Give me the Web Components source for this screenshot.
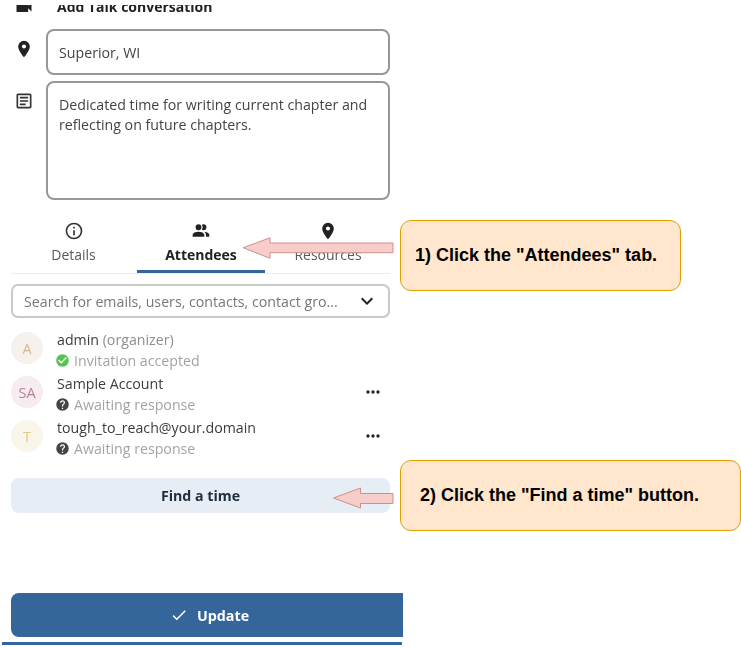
<!DOCTYPE html>
<html lang="en">
<head>
<meta charset="utf-8">
<title>Attendees</title>
<style>
html, body { margin: 0; padding: 0; background: #fff; }
body { font-family: "Open Sans", sans-serif; overflow: hidden; }
</style>
</head>
<body>
<event-page></event-page>
<script>
const ICONS = {
    video: "M17,10.5V7A1,1 0 0,0 16,6H4A1,1 0 0,0 3,7V17A1,1 0 0,0 4,18H16A1,1 0 0,0 17,17V13.5L21,17.5V6.5L17,10.5Z",
    marker: "M12,11.5A2.5,2.5 0 0,1 9.5,9A2.5,2.5 0 0,1 12,6.5A2.5,2.5 0 0,1 14.5,9A2.5,2.5 0 0,1 12,11.5M12,2A7,7 0 0,0 5,9C5,14.25 12,22 12,22C12,22 19,14.25 19,9A7,7 0 0,0 12,2Z",
    text: "M5,3C3.89,3 3,3.89 3,5V19C3,20.11 3.89,21 5,21H19C20.11,21 21,20.11 21,19V5C21,3.89 20.11,3 19,3H5M5,5H19V19H5V5M7,7V9H17V7H7M7,11V13H17V11H7M7,15V17H14V15H7Z",
    info: "M11,9H13V7H11M12,20C7.59,20 4,16.41 4,12C4,7.59 7.59,4 12,4C16.41,4 20,7.59 20,12C20,16.41 16.41,20 12,20M12,2A10,10 0 0,0 2,12A10,10 0 0,0 12,22A10,10 0 0,0 22,12A10,10 0 0,0 12,2M11,17H13V11H11V17Z",
    people: "M16 17V19H2V17S2 13 9 13 16 17 16 17M12.5 7.5A3.5 3.5 0 1 0 9 11A3.5 3.5 0 0 0 12.5 7.5M15.94 13A5.32 5.32 0 0 1 18 17V19H22V17S22 13.37 15.94 13M15 4A3.39 3.39 0 0 0 13.07 4.59A5 5 0 0 1 13.07 10.41A3.39 3.39 0 0 0 15 11A3.5 3.5 0 0 0 15 4Z",
    chevron: "M7.41,8.58L12,13.17L16.59,8.58L18,10L12,16L6,10L7.41,8.58Z",
    dots: "M16,12A2,2 0 0,1 18,10A2,2 0 0,1 20,12A2,2 0 0,1 18,14A2,2 0 0,1 16,12M10,12A2,2 0 0,1 12,10A2,2 0 0,1 14,12A2,2 0 0,1 12,14A2,2 0 0,1 10,12M4,12A2,2 0 0,1 6,10A2,2 0 0,1 8,12A2,2 0 0,1 6,14A2,2 0 0,1 4,12Z",
    check: "M21,7L9,19L3.5,13.5L4.91,12.09L9,16.17L19.59,5.59L21,7Z",
    accepted: "M12 2C6.5 2 2 6.5 2 12S6.5 22 12 22 22 17.5 22 12 17.5 2 12 2M10 17L5 12L6.41 10.59L10 14.17L17.59 6.58L19 8L10 17Z",
    question: "M15.07,11.25L14.17,12.17C13.45,12.89 13,13.5 13,15H11V14.5C11,13.39 11.45,12.39 12.17,11.67L13.41,10.41C13.78,10.05 14,9.55 14,9C14,7.89 13.1,7 12,7A2,2 0 0,0 10,9H8A4,4 0 0,1 12,5A4,4 0 0,1 16,9C16,9.88 15.64,10.67 15.07,11.25M13,19H11V17H13M12,2A10,10 0 0,0 2,12A10,10 0 0,0 12,22A10,10 0 0,0 22,12C22,6.47 17.5,2 12,2Z"
};

class MdiIcon extends HTMLElement {
    connectedCallback() {
        const size = this.getAttribute("size") || 20;
        const color = this.getAttribute("color") || "currentColor";
        this.attachShadow({mode: "open"}).innerHTML = `
        <style>
        :host { display: inline-flex; width: ${size}px; height: ${size}px; flex: none; }
        svg { width: 100%; height: 100%; display: block; }
        </style>
        <svg viewBox="0 0 24 24"><path fill="${color}" d="${ICONS[this.getAttribute("name")]}"/></svg>`;
    }
}
customElements.define("mdi-icon", MdiIcon);

class FieldRow extends HTMLElement {
    connectedCallback() {
        const h = this.getAttribute("height");
        this.attachShadow({mode: "open"}).innerHTML = `
        <style>
        :host { display: flex; align-items: flex-start; color: #222; }
        .icon { width: 35px; padding-top: var(--icon-top, 10px); padding-left: 3px; box-sizing: border-box; }
        .box {
            width: 344px;
            height: ${h}px;
            box-sizing: border-box;
            border: 2px solid #979797;
            border-radius: 8px;
            padding: 12px 11px;
            font-size: 14.2px;
            line-height: 20px;
            color: #444;
        }
        </style>
        <div class="icon"><slot name="icon"></slot></div>
        <div class="box"><slot></slot></div>`;
    }
}
customElements.define("field-row", FieldRow);

class TabItem extends HTMLElement {
    connectedCallback() {
        const active = this.hasAttribute("active");
        this.attachShadow({mode: "open"}).innerHTML = `
        <style>
        :host {
            display: flex;
            flex-direction: column;
            align-items: center;
            width: var(--tab-width, 126px);
            height: 52px;
            box-sizing: border-box;
            font-size: 14px;
            line-height: 20px;
            color: ${active ? "#222" : "#595959"};
            font-weight: ${active ? 700 : 400};
            border-bottom: 3px solid ${active ? "#34659b" : "transparent"};
        }
        .label { margin-top: 4px; }
        </style>
        <slot name="icon"></slot>
        <div class="label"><slot></slot></div>`;
    }
}
customElements.define("tab-item", TabItem);

class AttendeeRow extends HTMLElement {
    connectedCallback() {
        const accepted = this.getAttribute("status") === "accepted";
        const more = this.hasAttribute("more") ? `<mdi-icon class="more" name="dots" size="20" color="#222"></mdi-icon>` : "";
        this.attachShadow({mode: "open"}).innerHTML = `
        <style>
        :host { display: flex; align-items: center; height: 44px; }
        .avatar {
            width: 32px;
            height: 32px;
            border-radius: 50%;
            display: flex;
            align-items: center;
            justify-content: center;
            font-size: 14.5px;
            flex: none;
            background: var(--avatar-bg);
            color: var(--avatar-fg);
        }
        .info { margin: 2px 0 0 14px; flex: 1; min-width: 0; }
        .name { font-size: 14.2px; line-height: 22px; color: #3c3c3c; padding-top: 1px; margin-bottom: -1px; }
        .status { display: flex; align-items: center; gap: 4px; margin-left: -2px; font-size: 14.2px; line-height: 21px; color: #a3a3a3; }
        .more { margin-right: 7px; }
        </style>
        <div class="avatar">${this.getAttribute("initials")}</div>
        <div class="info">
            <div class="name"><slot></slot></div>
            <div class="status">
                <mdi-icon name="${accepted ? "accepted" : "question"}" size="15" color="${accepted ? "#55c34f" : "#454545"}"></mdi-icon>
                ${this.getAttribute("label")}
            </div>
        </div>
        ${more}`;
    }
}
customElements.define("attendee-row", AttendeeRow);

class CalloutBox extends HTMLElement {
    connectedCallback() {
        this.attachShadow({mode: "open"}).innerHTML = `
        <style>
        :host {
            position: absolute;
            display: flex;
            align-items: center;
            box-sizing: border-box;
            height: 71px;
            background: #ffe6cc;
            border: 1px solid #e0a000;
            border-radius: 11px;
            font-family: "Liberation Sans", Arial, sans-serif;
            font-weight: 700;
            font-size: 18px;
            color: #000;
            white-space: nowrap;
        }
        </style>
        <slot></slot>`;
    }
}
customElements.define("callout-box", CalloutBox);

class EventPage extends HTMLElement {
    connectedCallback() {
        this.attachShadow({mode: "open"}).innerHTML = `
        <style>
        :host { display: block; position: relative; width: 741px; height: 648px; overflow: hidden; background: #fff; }
        .panel { width: 403px; box-sizing: border-box; padding-left: 11px; height: 648px; filter: blur(0.45px); }
        .clipped { height: 8px; overflow: hidden; display: flex; align-items: flex-end; color: #222; margin-top: 5px; margin-bottom: 16px; }
        .clipped .inner { display: flex; align-items: center; margin-bottom: -4px; }
        .clipped mdi-icon { margin-left: 3px; margin-right: 23px; }
        .clipped b { font-size: 14px; line-height: 20px; }
        field-row + field-row { margin-top: 6px; }
        .tabs { display: flex; width: 379px; height: 52px; margin-top: 21px; border-bottom: 1px solid #ededed; }
        .tabs tab-item { flex: none; }
        .tabs tab-item:first-child { --tab-width: 125px; margin-right: 1px; }
        .tabs tab-item[active] { --tab-width: 128px; }
        .search {
            display: flex;
            align-items: center;
            justify-content: space-between;
            width: 379px;
            height: 34px;
            box-sizing: border-box;
            margin-top: 10px;
            border: 2px solid #c8c8c8;
            border-radius: 7px;
            padding: 0 9px 0 11px;
            font-size: 14.2px;
            color: #777;
            white-space: nowrap;
        }
        .people { margin-top: 8px; width: 379px; }
        .find {
            display: flex;
            align-items: center;
            justify-content: center;
            width: 379px;
            height: 35px;
            margin-top: 20px;
            border-radius: 8px;
            background: #e6edf4;
            color: #1f2d3d;
            font-size: 14.2px;
            font-weight: 700;
        }
        .update {
            display: flex;
            align-items: center;
            justify-content: center;
            gap: 9px;
            width: 392px;
            height: 44px;
            box-sizing: border-box;
            padding-left: 5px;
            margin-top: 80px;
            border-radius: 8px 0 0 8px;
            background: #34659b;
            color: #fff;
            font-size: 14.3px;
            font-weight: 700;
        }
        .rule { height: 3px; width: 400px; margin: 5px 0 0 -9px; background: #34659b; }
        .arrow { position: absolute; left: 0; top: 0; pointer-events: none; }
        </style>
        <div class="panel">
            <div class="clipped">
                <div class="inner">
                    <mdi-icon name="video" size="20"></mdi-icon>
                    <b>Add Talk conversation</b>
                </div>
            </div>
            <field-row height="46">
                <mdi-icon slot="icon" name="marker" size="20" color="#222"></mdi-icon>
                Superior, WI
            </field-row>
            <field-row height="119">
                <mdi-icon slot="icon" name="text" size="20" color="#333"></mdi-icon>
                Dedicated time for writing current chapter and reflecting on future chapters.
            </field-row>
            <div class="tabs">
                <tab-item><mdi-icon slot="icon" name="info" size="20" color="#333"></mdi-icon>Details</tab-item>
                <tab-item active><mdi-icon slot="icon" name="people" size="20" color="#222"></mdi-icon>Attendees</tab-item>
                <tab-item><mdi-icon slot="icon" name="marker" size="20" color="#222"></mdi-icon>Resources</tab-item>
            </div>
            <div class="search">
                Search for emails, users, contacts, contact gro...
                <mdi-icon name="chevron" size="24" color="#222"></mdi-icon>
            </div>
            <div class="people">
                <attendee-row initials="A" status="accepted" label="Invitation accepted" style="--avatar-bg:#f6f1ec;--avatar-fg:#d9b78c">admin <span style="color:#8e8e8e">(organizer)</span></attendee-row>
                <attendee-row initials="SA" status="waiting" label="Awaiting response" more style="--avatar-bg:#f5ebf0;--avatar-fg:#bd7f97">Sample Account</attendee-row>
                <attendee-row initials="T" status="waiting" label="Awaiting response" more style="--avatar-bg:#f9f5e9;--avatar-fg:#e2c98b">tough_to_reach@your.domain</attendee-row>
            </div>
            <div class="find">Find a time</div>
            <div class="update"><mdi-icon name="check" size="18" color="#fff"></mdi-icon>Update</div>
            <div class="rule"></div>
        </div>
        <svg class="arrow" width="741" height="648">
            <path d="M243 247.7 L270 237.8 V243 H393 V252.7 H270 V258.3 Z" fill="#f6cdc9" stroke="#cf908b" stroke-width="1"/>
            <path d="M333.5 498 L360.5 488 V493.5 H393 V503.5 H360.5 V508 Z" fill="#f6cdc9" stroke="#cf908b" stroke-width="1"/>
        </svg>
        <callout-box style="left:400px;top:220px;width:281px;padding-left:14px">1) Click the "Attendees" tab.</callout-box>
        <callout-box style="left:400px;top:460px;width:341px;padding-left:19px">2) Click the "Find a time" button.</callout-box>`;
    }
}
customElements.define("event-page", EventPage);
</script>
</body>
</html>
